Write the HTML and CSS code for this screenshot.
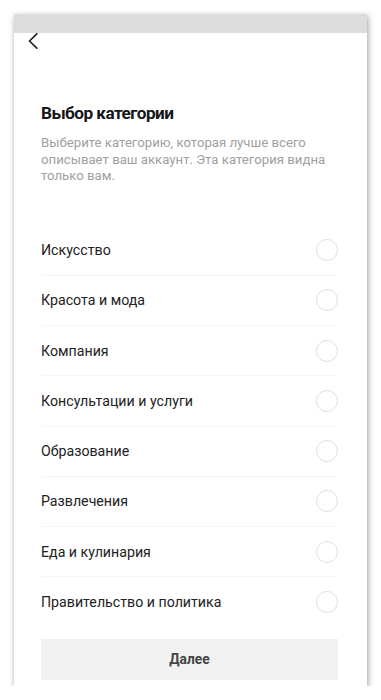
FILE: index.html
```html
<!DOCTYPE html>
<html lang="ru">
<head>
<meta charset="utf-8">
<title>Выбор категории</title>
<link rel="stylesheet" href="styles.css">
</head>
<body>
<div class="phone">
  <div class="statusbar"></div>
  <div class="nav">
    <svg class="back" width="12" height="16" viewBox="0 0 12 16"><path d="M9.8 0.8 L2.5 8 L9.8 15.2" fill="none" stroke="#222" stroke-width="1.7" stroke-linecap="round" stroke-linejoin="round"/></svg>
  </div>
  <div class="content">
    <h1 class="title">Выбор категории</h1>
    <p class="subtitle">Выберите категорию, которая лучше всего описывает ваш аккаунт. Эта категория видна только вам.</p>
    <ul class="list">
      <li class="row"><span class="label">Искусство</span><span class="radio"></span></li>
      <li class="row"><span class="label">Красота и мода</span><span class="radio"></span></li>
      <li class="row"><span class="label">Компания</span><span class="radio"></span></li>
      <li class="row"><span class="label">Консультации и услуги</span><span class="radio"></span></li>
      <li class="row"><span class="label">Образование</span><span class="radio"></span></li>
      <li class="row"><span class="label">Развлечения</span><span class="radio"></span></li>
      <li class="row"><span class="label">Еда и кулинария</span><span class="radio"></span></li>
      <li class="row"><span class="label">Правительство и политика</span><span class="radio"></span></li>
    </ul>
    <button class="next" type="button">Далее</button>
  </div>
</div>
</body>
</html>
```
FILE: styles.css
```css
* { box-sizing: border-box; }
html, body { margin: 0; padding: 0; background: #fff; }
body { font-family: Roboto, "Noto Sans", "Liberation Sans", sans-serif; }

.phone {
  margin: 14px 0 0 14px;
  width: 353px;
  height: 672px;
  background: #fff;
  box-shadow: 1px 2px 6px rgba(0,0,0,0.38);
  overflow: hidden;
  display: flex;
  flex-direction: column;
}

.statusbar { height: 19px; background: #dcdcdc; flex: none; }

.nav {
  height: 68px;
  flex: none;
  padding: 0 0 0 13px;
}
.back { display: block; }

.content { padding: 0 29px 0 27px; }

.title {
  margin: 0;
  font-size: 17.2px;
  line-height: 24px;
  font-weight: 700;
  letter-spacing: -0.55px;
  color: #161616;
}

.subtitle {
  margin: 10px 0 0;
  font-size: 13.2px;
  line-height: 16.5px;
  color: #a0a0a0;
}

.list { list-style: none; margin: 41px 0 0; padding: 0; }

.row {
  height: 50.25px;
  display: flex;
  align-items: center;
  justify-content: space-between;
  border-bottom: 1px solid #f6f6f6;
}
.row:last-child { border-bottom: none; }

.label { font-size: 14.2px; color: #222; }

.radio {
  width: 22px;
  height: 22px;
  border-radius: 50%;
  border: 1.2px solid #e0e0e0;
  flex: none;
}

.next {
  display: block;
  width: 100%;
  height: 41px;
  margin-top: 11px;
  border: none;
  background: #f1f1f1;
  font-family: inherit;
  font-size: 13.8px;
  font-weight: 700;
  color: #454545;
}
```
